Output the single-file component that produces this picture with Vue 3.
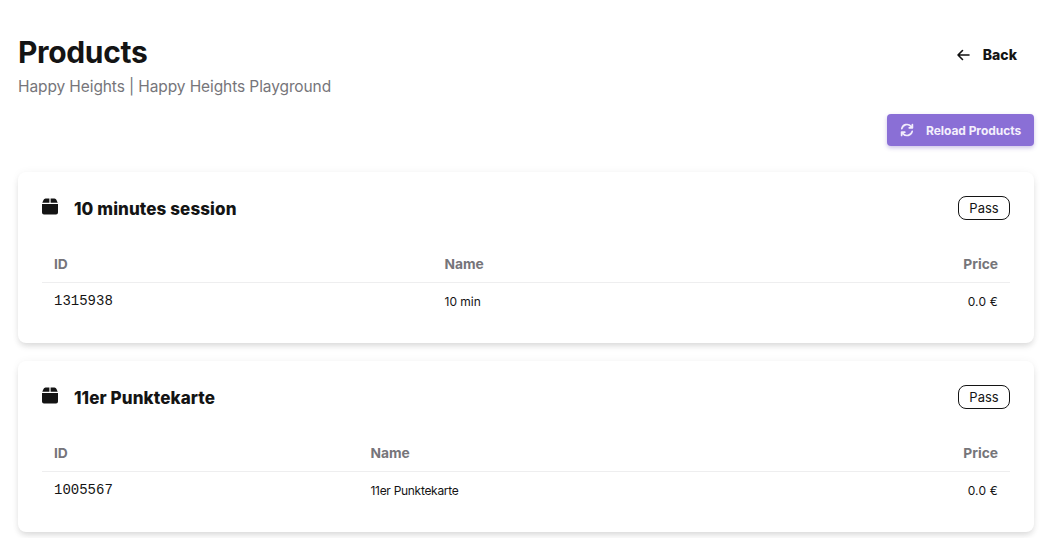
<script setup>
const products = [
  { title: '10 minutes session', id: '1315938', name: '10 min', price: '0.0 €', kind: 'wide' },
  { title: '11er Punktekarte', id: '1005567', name: '11er Punktekarte', price: '0.0 €', kind: 'narrow' }
]
</script>

<template>
  <div class="page">
    <header class="head">
      <div>
        <h1 class="title">Products</h1>
        <p class="sub">Happy Heights | Happy Heights Playground</p>
      </div>
      <a class="back">
        <svg width="16" height="16" viewBox="0 0 16 16" fill="none" stroke="#111" stroke-width="1.6" stroke-linecap="round" stroke-linejoin="round"><path d="M14 8H3M7.500 3.500 3 8l4.500 4.500"/></svg>
        <span>Back</span>
      </a>
    </header>
    <div class="actions">
      <button class="reload">
        <svg width="14" height="14" viewBox="0 0 14 14" fill="none" stroke="#f1ecfb" stroke-width="1.7" stroke-linecap="round" stroke-linejoin="round"><path d="M1.800 5.600A5.300 5.300 0 0 1 11 3.400L12.400 4.800M12.400 1.600v3.200H9.200M12.200 8.400A5.300 5.300 0 0 1 3 10.600L1.600 9.200M1.600 12.400V9.200h3.200"/></svg>
        <span>Reload Products</span>
      </button>
    </div>
    <section v-for="p in products" :key="p.id" class="card">
      <div class="card-head">
        <div class="card-title">
          <svg class="box" width="16" height="17" viewBox="0 0 16 17" fill="#141414"><path d="M3.500.5h3.900v4.300H.3L1.500 2A2.400 2.400 0 0 1 3.500.5ZM8.600.5h3.900A2.400 2.400 0 0 1 14.500 2l1.200 2.800H8.600V.5ZM0 6h16v8.500a2 2 0 0 1-2 2H2a2 2 0 0 1-2-2V6Z"/></svg>
          <h2>{{ p.title }}</h2>
        </div>
        <span class="badge">Pass</span>
      </div>
      <div class="table" :class="p.kind">
        <div class="row th">
          <span>ID</span><span>Name</span><span class="r">Price</span>
        </div>
        <div class="row td">
          <span class="mono">{{ p.id }}</span><span class="name">{{ p.name }}</span><span class="r price">{{ p.price }}</span>
        </div>
      </div>
    </section>
  </div>
</template>

<style>
html, body { background: #fff; margin: 0; }
</style>

<style scoped>
.page {
  padding: 33px 17px 6px 18px;
  font-family: "Inter", "Noto Sans", sans-serif;
  color: #141414;
}
.head { display: flex; justify-content: space-between; align-items: flex-start; }
.title { margin: 0; font-size: 30px; line-height: 38px; font-weight: 700; letter-spacing: -0.35px; }
.sub { margin: 4px 0 -1px; font-size: 15.500px; line-height: 24px; color: #76757a; letter-spacing: -0.1px; }
.back { display: flex; align-items: center; gap: 12px; margin: 14px 17px 0 0; font-size: 14px; line-height: 16px; font-weight: 800; }
.actions { display: flex; justify-content: flex-end; margin-top: 16px; }
.reload {
  display: flex; align-items: center; gap: 12px;
  width: 147px; height: 32px; padding: 0 0 0 13px; border: 0; border-radius: 4px;
  background: #8a6fd6; color: #f4f0fc;
  font: 700 12px "Inter", sans-serif; letter-spacing: -0.05px;
  box-shadow: 0 2px 4px rgba(90, 60, 180, .3);
}
.card {
  margin-top: 26px; padding: 24px; height: 171px; box-sizing: border-box;
  background: #fff; border-radius: 8px;
  box-shadow: 0 4px 6px -1px rgba(0, 0, 0, .13), 0 0 8px rgba(0, 0, 0, .045);
}
.card + .card { margin-top: 18px; }
.card-head { display: flex; justify-content: space-between; align-items: center; height: 24px; }
.card-title { display: flex; align-items: center; gap: 16px; }
.box { margin-top: -4px; }
h2 { margin: 0; padding-top: 1px; font-size: 17px; line-height: 24px; font-weight: 800; letter-spacing: 0.1px; }
.badge {
  box-sizing: border-box; width: 52px; height: 24px; border: 1px solid #141414; border-radius: 8px;
  font-size: 13px; line-height: 22px; text-align: center;
}
.table { margin-top: 24px; }
.row { display: grid; padding: 0 12px; align-items: center; }
.wide .row { grid-template-columns: 390.500px 1fr auto; }
.narrow .row { grid-template-columns: 316.500px 1fr auto; }
.th { height: 39px; padding-bottom: 1px; padding-top: 2px; box-sizing: border-box; border-bottom: 1px solid #eeeeef; font-size: 13.800px; font-weight: 700; color: #76757a; }
.td { height: 37px; font-size: 12px; }
.narrow .name { letter-spacing: -0.3px; }
.price { letter-spacing: 0.2px; }
.r { text-align: right; }
.mono { font-family: "Liberation Mono", monospace; font-size: 14px; margin-top: -2px; }
</style>
